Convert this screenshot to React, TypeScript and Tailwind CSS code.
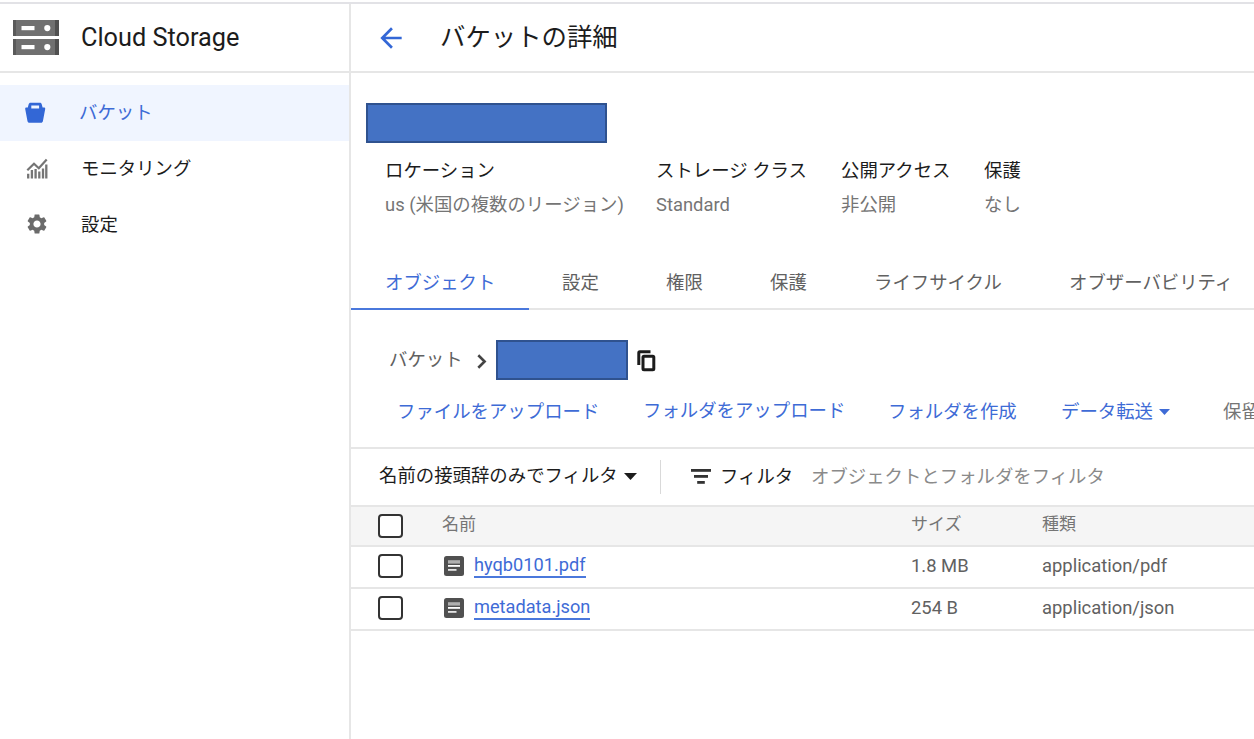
import type { ReactNode } from "react";
import { MdArrowBack, MdSettings } from "react-icons/md";

function ServerIcon() {
  return (
    <svg width="46" height="35" viewBox="0 0 46 35" className="shrink-0">
      {[0, 19].map((y) => (
        <g key={y}>
          <rect x="0" y={y} width="46" height="16" fill="#707070" />
          <rect x="0" y={y} width="3" height="16" fill="#5a5a5a" />
          <rect x="42" y={y} width="4" height="16" fill="#505050" />
          <rect x="8.5" y={y + 6} width="13" height="4.2" fill="#fff" />
          <circle cx="34.3" cy={y + 8.1} r="3.1" fill="#fff" />
        </g>
      ))}
    </svg>
  );
}

function BucketIcon() {
  return (
    <svg width="22" height="22" viewBox="0 0 22 22" className="-mt-px shrink-0">
      <path
        fill="#3367d6"
        fillRule="evenodd"
        d="M6.500 .8h9.400c1 0 1.700.6 1.900 1.600L18.600 5.500H20.100c.8 0 1.300.7 1.100 1.500l-2.300 12.300c-.2.900-.9 1.500-1.800 1.500H5.300c-.9 0-1.600-.6-1.800-1.500L1.200 7C1 6.200 1.500 5.500 2.300 5.500h1.500l.8-3.100C4.900 1.400 5.600.8 6.500.8ZM7.300 3.500v3h7.800v-3Z"
      />
    </svg>
  );
}

function ChartIcon() {
  return (
    <svg width="22" height="22" viewBox="0 0 22 22" className="shrink-0" fill="none" stroke="#757575">
      <path d="M1.300 12.300 8 5.800l4.800 4.400L20.700 1.400" strokeWidth="2.200" />
      <path d="M2.200 20.500v-4.700M5.900 20.500V12M9.600 20.500V11M13.300 20.500v-7M17 20.500V10.500M20.300 20.500V6.500" strokeWidth="2.300" />
    </svg>
  );
}

function CopyIcon() {
  return (
    <svg width="20" height="22" viewBox="0 0 20 22" className="shrink-0" fill="none" stroke="#1c1c1c" strokeWidth="3">
      <path d="M1.800 15V2.800c0-.6.4-1 1-1h10.700" />
      <rect x="6" y="6.300" width="10.800" height="13.500" rx="1" />
    </svg>
  );
}

function FilterIcon() {
  return (
    <svg width="20" height="15" viewBox="0 0 20 15" className="shrink-0" fill="#333">
      <rect y="0" width="20" height="2.800" />
      <rect x="3" y="6" width="14" height="2.800" />
      <rect x="6.200" y="12" width="7.600" height="2.800" />
    </svg>
  );
}

function FileIcon() {
  return (
    <svg width="20" height="20" viewBox="0 0 20 20" className="shrink-0">
      <rect width="20" height="20" rx="2.500" fill="#505050" />
      <rect x="4" y="4.200" width="12" height="3.400" fill="#b0b0b0" />
      <rect x="4" y="9" width="12" height="1.800" fill="#fff" />
      <rect x="4" y="13" width="8.500" height="1.800" fill="#e5e5e5" />
    </svg>
  );
}

function Caret({ className }: { className: string }) {
  return (
    <svg viewBox="0 0 12 6" preserveAspectRatio="none" className={className} fill="currentColor">
      <path d="M0 0h12L6 6z" />
    </svg>
  );
}

function NavItem({ icon, label, active }: { icon: ReactNode; label: string; active?: boolean }) {
  return (
    <div className={active ? "flex h-14 items-center bg-[#f0f5ff] pl-6 text-[#3e6bd6]" : "flex h-14 items-center pl-[26px] text-[#1c1c1c]"}>
      {icon}
      <span className="ml-[33px]">{label}</span>
    </div>
  );
}

function Info({ label, value }: { label: string; value: string }) {
  return (
    <div className="leading-[34px]">
      <div className="text-[#1c1c1c]">{label}</div>
      <div className="text-[#757575]">{value}</div>
    </div>
  );
}

function Checkbox() {
  return <div className="h-6 w-[25px] rounded-[4px] border-2 border-[#333] bg-white" />;
}

const columns = "grid grid-cols-[64px_469px_131px_1fr] items-center border-b-2 border-[#e6e6e6] pl-[27px]";

const files = [
  { name: "hyqb0101.pdf", size: "1.8 MB", type: "application/pdf" },
  { name: "metadata.json", size: "254 B", type: "application/json" },
];

export default function App() {
  return (
    <div className="h-[739px] w-[1254px] overflow-hidden bg-white pt-0.5 font-[Roboto,'Noto_Sans_CJK_JP',sans-serif] text-[18.400px] whitespace-nowrap">
      <div className="flex h-full border-t-2 border-[#e2e2e6]">
        <aside className="w-[351px] shrink-0 border-r-2 border-[#e6e6e6]">
          <div className="flex h-[69px] items-center border-b-2 border-[#e6e6e6] pl-[13px]">
            <ServerIcon />
            <h1 className="ml-[22px] text-[25.300px] text-[#1c1c1c]">Cloud Storage</h1>
          </div>
          <nav className="pt-3">
            <NavItem active icon={<BucketIcon />} label="バケット" />
            <NavItem icon={<ChartIcon />} label="モニタリング" />
            <NavItem icon={<MdSettings size={24} color="#6b6b6b" className="-mt-[2px] -mr-px -ml-px shrink-0" />} label="設定" />
          </nav>
        </aside>

        <main className="min-w-0 flex-1 overflow-hidden">
          <header className="flex h-[69px] items-center border-b-2 border-[#e6e6e6] pl-[25px]">
            <MdArrowBack size={32} color="#3367d6" className="-ml-px shrink-0" />
            <h2 className="ml-[33px] text-[25.400px] leading-none text-[#1c1c1c]">バケットの詳細</h2>
          </header>

          <div className="mt-[30px] ml-[15px] h-10 w-[241px] border-2 border-[#2f528f] bg-[#4472c4]" />
          <section className="mt-[11px] grid grid-cols-[271px_185px_143px_auto] pl-[34px]">
            <Info label="ロケーション" value="us (米国の複数のリージョン)" />
            <Info label="ストレージ クラス" value="Standard" />
            <Info label="公開アクセス" value="非公開" />
            <Info label="保護" value="なし" />
          </section>

          <div className="mt-[36px] grid h-[52px] grid-cols-[178px_104px_104px_104px_195px_auto] border-b-2 border-[#e6e6e6] leading-[50px] text-[#616161]">
            <div className="mb-px border-b-2 border-[#4a78dc] pl-[34px] text-[#3e6bd6]">オブジェクト</div>
            <div className="pl-[33px]">設定</div>
            <div className="pl-[33px]">権限</div>
            <div className="pl-[33px]">保護</div>
            <div className="pl-[33px]">ライフサイクル</div>
            <div className="pl-[33px]">オブザーバビリティ</div>
          </div>

          <div className="mt-[30px] flex h-10 items-center pl-[38px] text-[#616161]">
            <span className="w-[73px]">バケット</span>
            <svg width="10" height="15" viewBox="0 0 10 15" className="mt-[3px] ml-[15px] shrink-0" fill="none" stroke="#444" strokeWidth="2.600">
              <path d="M1.300 1.300 7.600 7.500 1.300 13.700" />
            </svg>
            <div className="ml-[9px] h-10 w-[132px] shrink-0 border-2 border-[#2f528f] bg-[#4472c4]" />
            <div className="ml-[9px] pt-[2px]"><CopyIcon /></div>
          </div>

          <div className="grid h-[69px] grid-cols-[246px_245px_173px_162px_auto] border-b-2 border-[#e6e6e6] pl-[46px] leading-[63px] text-[#3e6bd6]">
            <span>ファイルをアップロード</span>
            <span className="-mt-px">フォルダをアップロード</span>
            <span>フォルダを作成</span>
            <span className="flex items-center self-start">データ転送<Caret className="ml-[6px] h-[6px] w-[11px]" /></span>
            <span className="text-[#757575]">保留</span>
          </div>

          <div className="flex h-[58px] items-center border-b-2 border-[#e6e6e6] pl-7 text-[#1c1c1c]">
            <span className="-mt-[2px] w-[238px]">名前の接頭辞のみでフィルタ</span>
            <Caret className="-mt-px ml-[7px] h-[7px] w-[13px]" />
            <div className="ml-[23px] h-[34px] w-px bg-[#d9d9d9]" />
            <div className="-mt-[2px] ml-[30px]"><FilterIcon /></div>
            <span className="ml-[9px] w-[91px]">フィルタ</span>
            <span className="text-[#8a8a8a]">オブジェクトとフォルダをフィルタ</span>
          </div>

          <div className={`${columns} h-10 bg-[#f5f5f5] text-[17px] text-[#757575]`}>
            <Checkbox />
            <span className="-mt-[2px]">名前</span>
            <span className="-mt-[3px]">サイズ</span>
            <span className="-mt-[3px]">種類</span>
          </div>
          {files.map((file) => (
            <div key={file.name} className={`${columns} h-[42px] pb-[2px] text-[#616161]`}>
              <Checkbox />
              <div className="flex items-center pl-[2px] text-[18.200px]">
                <FileIcon />
                <a className="ml-[10px] border-b-2 border-[#4a78dc] leading-[22px] text-[#3e6bd6]">{file.name}</a>
              </div>
              <span className="-mt-px">{file.size}</span>
              <span className="-mt-px">{file.type}</span>
            </div>
          ))}
        </main>
      </div>
    </div>
  );
}
